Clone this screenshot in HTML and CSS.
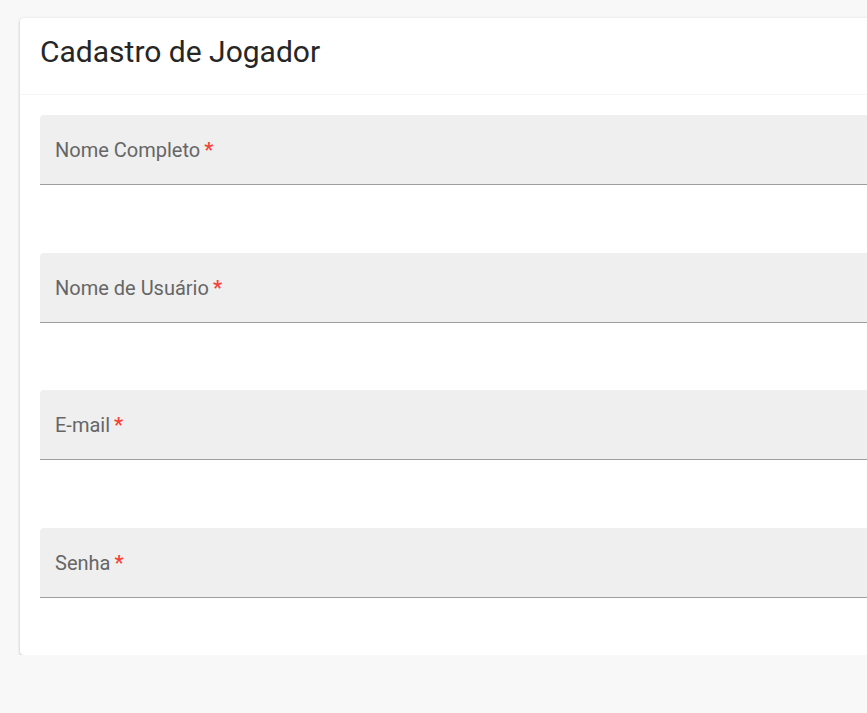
FILE: index.html
```html
<!DOCTYPE html>
<html lang="pt-BR">
<head>
  <meta charset="UTF-8">
  <meta name="viewport" content="width=device-width, initial-scale=1.0">
  <title>Cadastro de Jogador</title>
  <link rel="stylesheet" href="styles.css">
</head>
<body>
  <div class="card">
    <div class="card-header">
      <h1 class="title">Cadastro de Jogador</h1>
    </div>
    <form class="form">
      <label class="field">
        <span class="label">Nome Completo<span class="req">*</span></span>
        <input type="text" name="nome">
      </label>
      <label class="field">
        <span class="label">Nome de Usuário<span class="req">*</span></span>
        <input type="text" name="usuario">
      </label>
      <label class="field">
        <span class="label">E-mail<span class="req">*</span></span>
        <input type="email" name="email">
      </label>
      <label class="field">
        <span class="label">Senha<span class="req">*</span></span>
        <input type="password" name="senha">
      </label>
    </form>
  </div>
</body>
</html>
```

FILE: styles.css
```css
html {
  overflow: hidden;
}

body {
  font-family: Roboto, "Liberation Sans", Arial, sans-serif;
  margin: 0;
  padding: 18px 0 0 20px;
  background-color: #f8f8f8;
}

.card {
  width: 900px;
  background-color: #fff;
  border-radius: 4px;
  box-shadow: 0 1px 3px rgba(0, 0, 0, 0.25);
  padding-bottom: 57px;
}

.card-header {
  height: 77px;
  padding: 0 20px;
  border-bottom: 1px solid #f6f6f6;
  box-sizing: border-box;
}

.title {
  margin: 0;
  padding-top: 15px;
  font-size: 30px;
  font-weight: 400;
  line-height: 38px;
  color: #262626;
}

.form {
  display: flex;
  flex-direction: column;
  gap: 67.6px;
  padding: 20px 0 0 20px;
}

.field {
  position: relative;
  display: block;
  height: 70px;
  background-color: #efefef;
  border-radius: 4px 4px 0 0;
  border-bottom: 1px solid #9e9e9e;
  box-sizing: border-box;
}

.label {
  position: absolute;
  left: 15px;
  top: 23px;
  font-size: 20px;
  line-height: 24px;
  color: #666;
}

.req {
  color: #f44336;
  font-weight: 700;
  margin-left: 4px;
}

.field input {
  width: 100%;
  height: 100%;
  border: none;
  outline: none;
  background: transparent;
}
```
